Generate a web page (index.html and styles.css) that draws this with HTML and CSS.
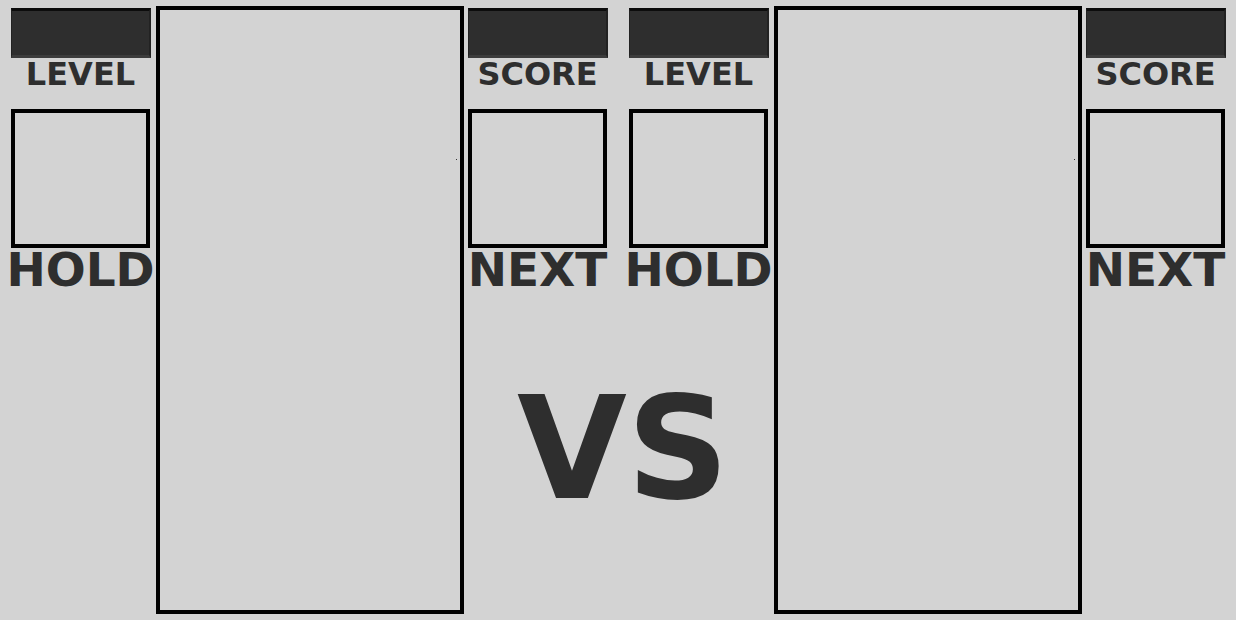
FILE: index.html
```html
<!DOCTYPE html>
<html>
<head>
<meta charset="utf-8">
<link rel="stylesheet" href="styles.css">
</head>
<body>
<div class="arena">
  <div class="player">
    <div class="side">
      <div class="bar"></div>
      <div class="label">LEVEL</div>
      <div class="piece-box"></div>
      <div class="big-label">HOLD</div>
    </div>
    <div class="board"><span class="dot"></span></div>
    <div class="side">
      <div class="bar"></div>
      <div class="label">SCORE</div>
      <div class="piece-box"></div>
      <div class="big-label">NEXT</div>
    </div>
  </div>
  <div class="player">
    <div class="side">
      <div class="bar"></div>
      <div class="label">LEVEL</div>
      <div class="piece-box"></div>
      <div class="big-label">HOLD</div>
    </div>
    <div class="board"><span class="dot"></span></div>
    <div class="side">
      <div class="bar"></div>
      <div class="label">SCORE</div>
      <div class="piece-box"></div>
      <div class="big-label">NEXT</div>
    </div>
  </div>
  <div class="vs">VS</div>
</div>
</body>
</html>
```

FILE: styles.css
```css
html, body {
  margin: 0;
  padding: 0;
  background: #d3d3d3;
}

body {
  font-family: "DejaVu Sans", Verdana, sans-serif;
  font-weight: bold;
  color: #2e2e2e;
  overflow: hidden;
}

.arena {
  position: relative;
  display: grid;
  grid-template-columns: 1fr 1fr;
  height: 620px;
}

.player {
  display: flex;
  justify-content: center;
  align-items: flex-start;
  padding-top: 6px;
}

.side {
  width: 140px;
  padding-top: 2px;
  display: flex;
  flex-direction: column;
  align-items: center;
}

.bar {
  box-sizing: border-box;
  width: 140px;
  height: 50px;
  background: #2e2e2e;
  border-top: 3px solid #0c0c0c;
  border-left: 1px solid #222;
  border-right: 2px solid #222;
  border-bottom: 3px solid #3c3c3c;
}

.label {
  font-size: 32px;
  line-height: 1;
  text-align: center;
}

.piece-box {
  box-sizing: border-box;
  width: 139px;
  height: 139px;
  margin-top: 19px;
  border: 4px solid #000;
}

.big-label {
  font-size: 47px;
  line-height: 1;
  margin-top: -2px;
  text-align: center;
  white-space: nowrap;
}

.board {
  position: relative;
  box-sizing: border-box;
  width: 308px;
  height: 608px;
  margin: 0 4px 0 5px;
  border: 4px solid #000;
}

.dot {
  position: absolute;
  left: 296px;
  top: 149px;
  width: 1px;
  height: 1px;
  background: #333;
}

.vs {
  position: absolute;
  left: 50%;
  top: 378px;
  transform: translateX(calc(-50% + 5px));
  font-size: 142px;
  line-height: 1;
}
```
